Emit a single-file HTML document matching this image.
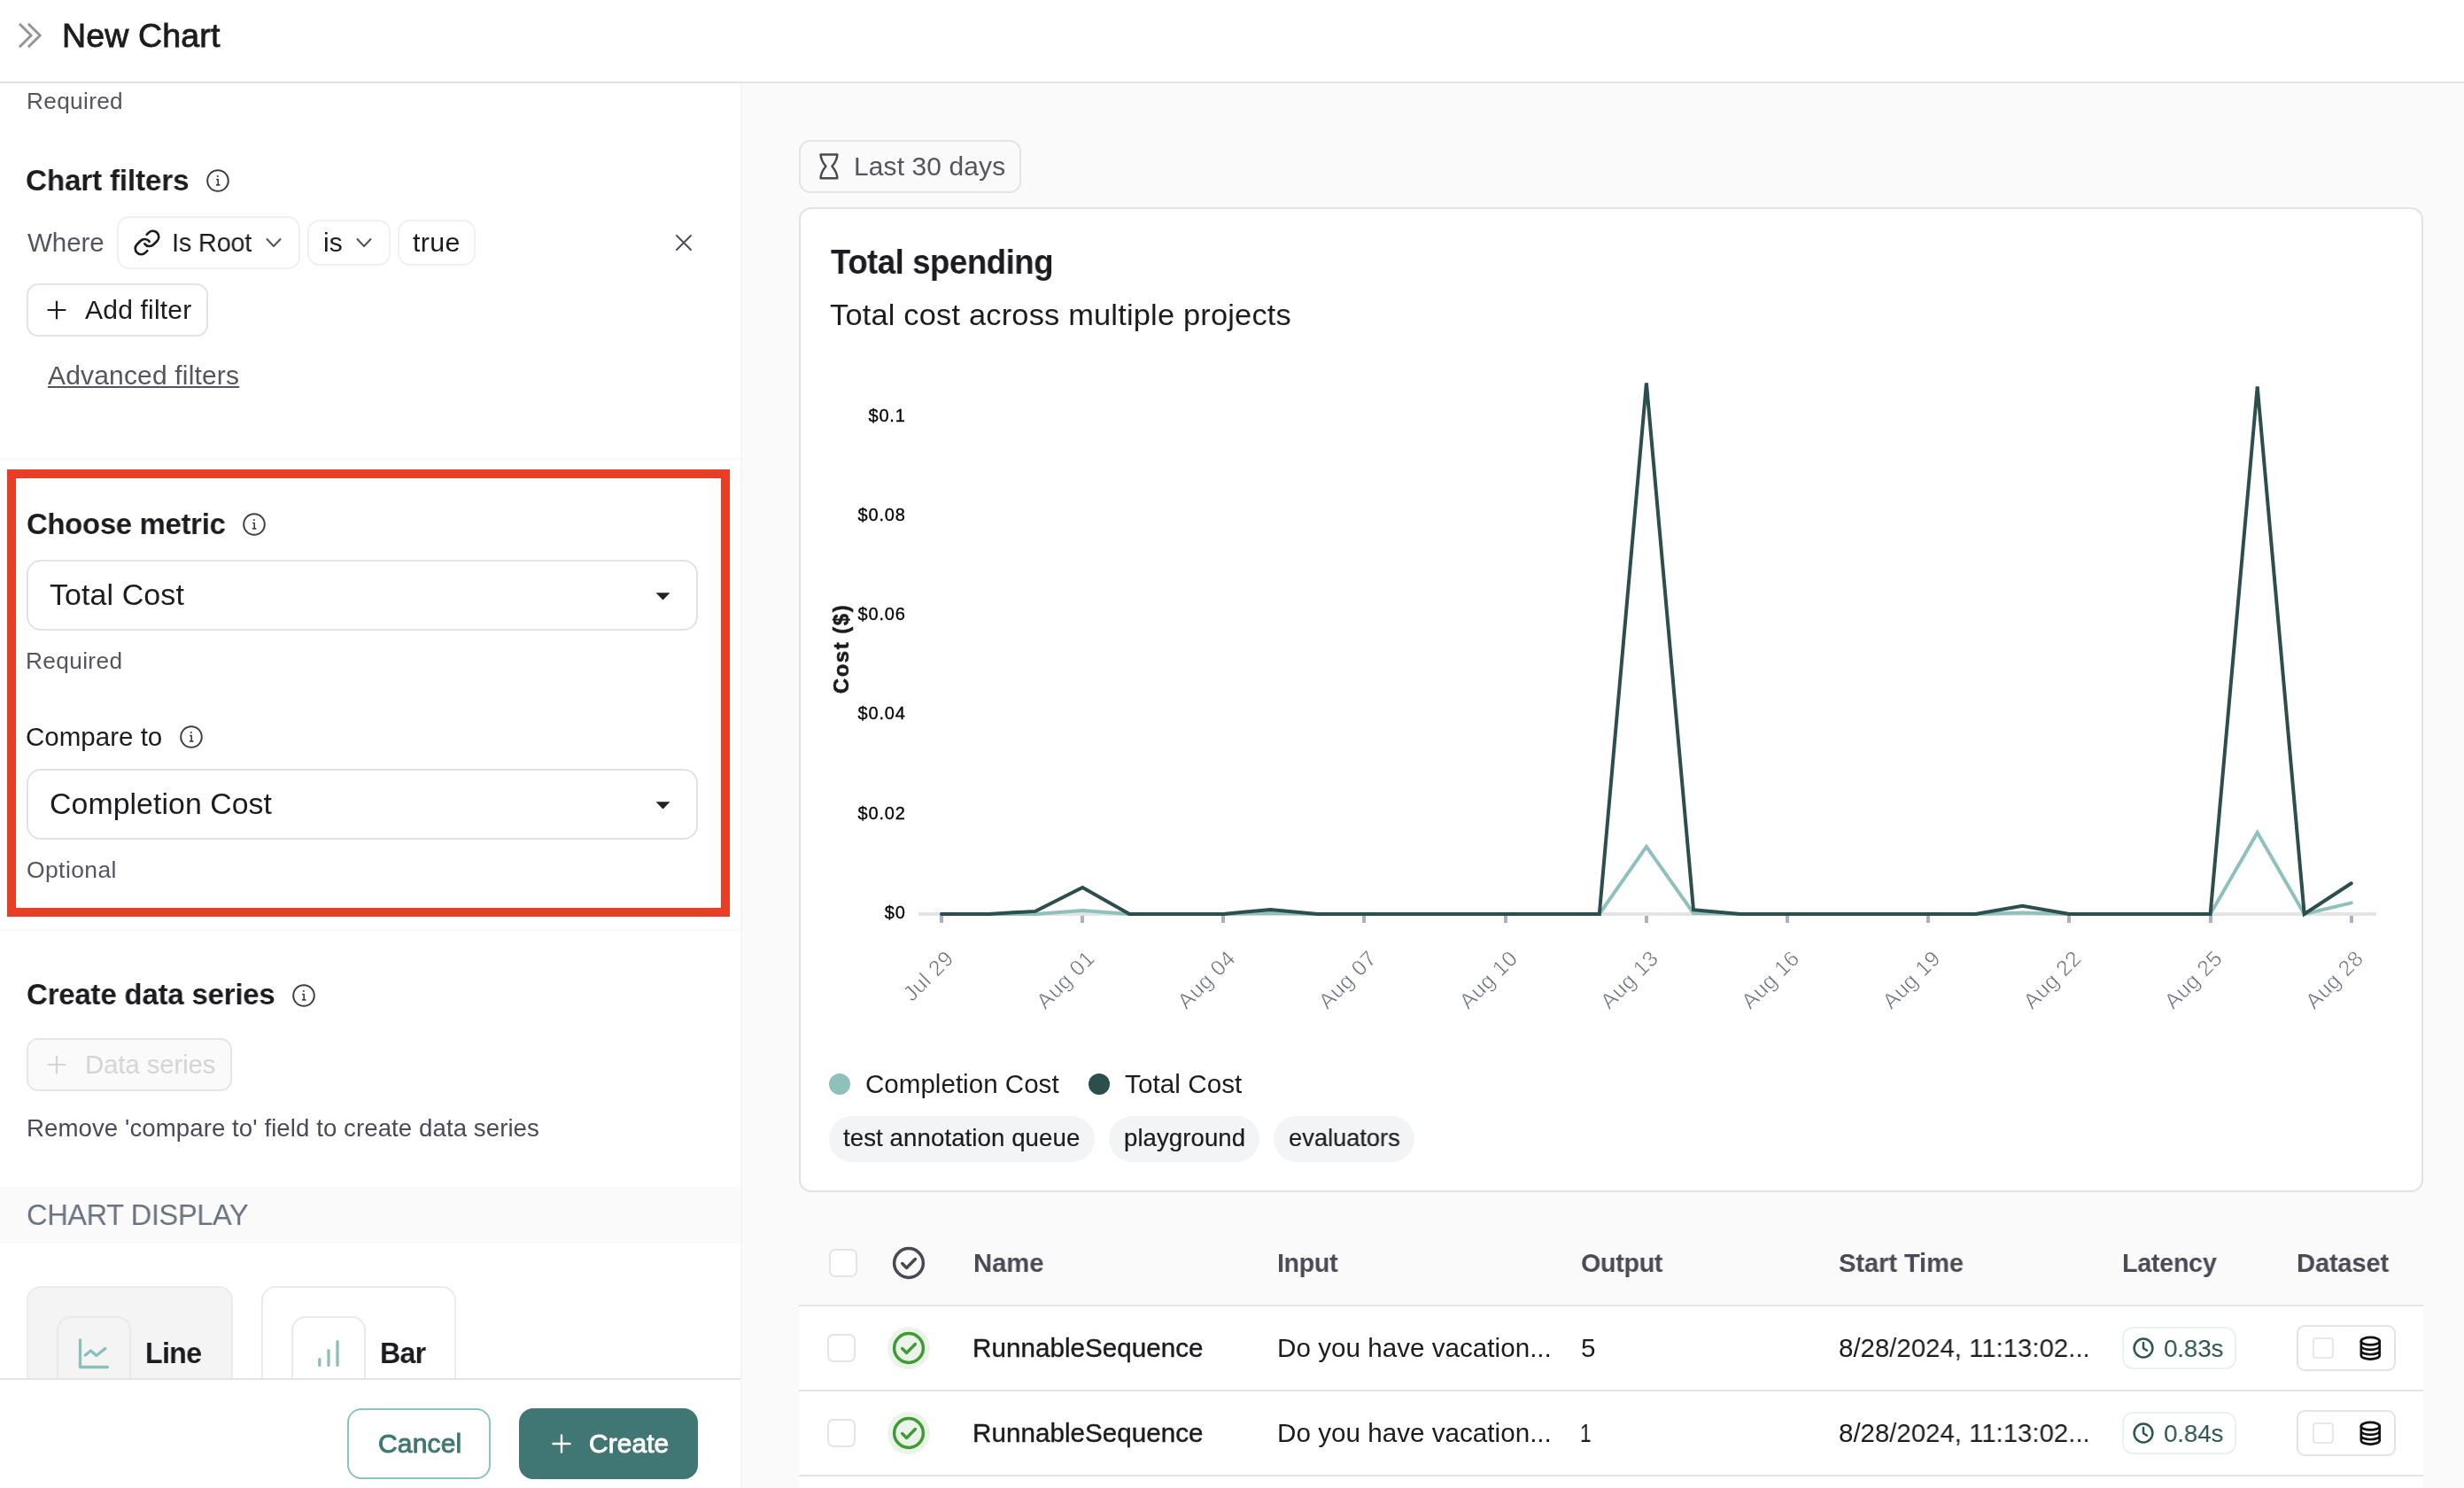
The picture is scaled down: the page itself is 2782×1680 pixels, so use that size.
<!DOCTYPE html>
<html lang="en">
<head>
<meta charset="utf-8">
<title>New Chart</title>
<style>
*{box-sizing:border-box;margin:0;padding:0}
html,body{width:2782px;height:1680px;overflow:hidden}
body{position:relative;background:#fafafa;font-family:"Liberation Sans",sans-serif;color:#1c1c20;-webkit-font-smoothing:antialiased}
.abs,.t,.box,svg.ic{position:absolute}
.t{white-space:pre;line-height:1;display:block;transform-origin:0 50%;will-change:transform}
.box{border:2px solid #e4e4e7;background:#fff}
header{position:absolute;left:0;top:0;width:2782px;height:94px;background:#fff;border-bottom:2px solid #e2e2e6}
aside{position:absolute;left:0;top:94px;width:838px;height:1586px;background:#fff;border-right:2px solid #f4f4f5}
main{position:absolute;left:838px;top:94px;width:1944px;height:1586px;background:#fafafa}
.band{position:absolute;left:0;width:836px;background:#fafafa}
.hl{position:absolute;left:8px;top:530px;width:816px;height:505px;border:10px solid #e83e26}
footer{position:absolute;left:0;top:1556px;width:836px;height:124px;background:#fff;border-top:2px solid #e4e4e7}
svg{overflow:visible}
svg.ic{fill:none;stroke-linecap:round;stroke-linejoin:round}

</style>
</head>
<body>
<header></header>
<aside></aside>
<main></main>

<!-- left panel -->
<svg class="ic" style="left:18px;top:24px" width="32" height="32" viewBox="0 0 32 32" stroke="#949494" stroke-width="3"><path d="M4.8 3.7 17.2 16 4.8 28.3M14.8 3.7 27.2 16 14.8 28.3"/></svg>

<div class="band" style="top:516px;height:4px"></div>
<div class="band" style="top:1048px;height:4px"></div>

<!-- chart filters -->
<svg class="ic info" style="left:232px;top:190px" width="28" height="28" viewBox="0 0 28 28" stroke="#3f3f4a" stroke-width="2"><circle cx="14" cy="14" r="11.8"/><path d="M12.8 12.6h1.4v6M12.6 18.9h3.2" stroke-width="1.6"/><circle cx="13.8" cy="9" r="1.1" fill="#3f3f4a" stroke="none"/></svg>

<div class="box" style="left:132px;top:244px;width:207px;height:60px;border-radius:14px;border-color:#f0f0f2"></div>
<svg class="ic" style="left:150px;top:258px" width="32" height="32" viewBox="0 0 24 24" stroke="#1c1c20" stroke-width="2"><path d="M10 13a5 5 0 0 0 7.54.54l3-3a5 5 0 0 0-7.07-7.07l-1.72 1.71"/><path d="M14 11a5 5 0 0 0-7.540-.54l-3 3a5 5 0 0 0 7.070 7.070l1.710-1.710"/></svg>
<svg class="ic" style="left:300px;top:268px" width="18" height="12" viewBox="0 0 18 12" stroke="#52525b" stroke-width="2"><path d="M1.5 2 9 10 16.5 2"/></svg>

<div class="box" style="left:347px;top:248px;width:94px;height:52px;border-radius:14px;border-color:#f0f0f2"></div>
<svg class="ic" style="left:402px;top:268px" width="18" height="12" viewBox="0 0 18 12" stroke="#52525b" stroke-width="2"><path d="M1.5 2 9 10 16.5 2"/></svg>

<div class="box" style="left:449px;top:248px;width:88px;height:52px;border-radius:14px;border-color:#f0f0f2"></div>

<svg class="ic" style="left:762px;top:264px" width="20" height="20" viewBox="0 0 20 20" stroke="#4b4b57" stroke-width="1.9"><path d="M2 2 18 18M18 2 2 18"/></svg>

<div class="box" style="left:30px;top:320px;width:205px;height:60px;border-radius:13px"></div>
<svg class="ic" style="left:53px;top:339px" width="22" height="22" viewBox="0 0 22 22" stroke="#1c1c20" stroke-width="2.2"><path d="M11 1.5v19M1.5 11h19"/></svg>

<!-- highlighted metric section -->
<div class="hl"></div>
<svg class="ic info" style="left:273px;top:578px" width="28" height="28" viewBox="0 0 28 28" stroke="#3f3f4a" stroke-width="2"><circle cx="14" cy="14" r="11.8"/><path d="M12.8 12.6h1.4v6M12.6 18.9h3.2" stroke-width="1.6"/><circle cx="13.8" cy="9" r="1.1" fill="#3f3f4a" stroke="none"/></svg>
<div class="box" style="left:30px;top:632px;width:758px;height:80px;border-radius:16px;border-color:#e2e2e6"></div>
<svg class="abs" style="left:739.6px;top:668.8px" width="17" height="9" viewBox="0 0 17 9"><path d="M0.5 0.300h16L8.5 8.500z" fill="#222226"/></svg>
<svg class="ic info" style="left:202px;top:818px" width="28" height="28" viewBox="0 0 28 28" stroke="#3f3f4a" stroke-width="2"><circle cx="14" cy="14" r="11.8"/><path d="M12.8 12.6h1.4v6M12.6 18.9h3.2" stroke-width="1.6"/><circle cx="13.8" cy="9" r="1.1" fill="#3f3f4a" stroke="none"/></svg>
<div class="box" style="left:30px;top:868px;width:758px;height:80px;border-radius:16px;border-color:#e2e2e6"></div>
<svg class="abs" style="left:739.6px;top:904.8px" width="17" height="9" viewBox="0 0 17 9"><path d="M0.5 0.300h16L8.5 8.500z" fill="#222226"/></svg>

<!-- data series -->
<svg class="ic info" style="left:329px;top:1110px" width="28" height="28" viewBox="0 0 28 28" stroke="#3f3f4a" stroke-width="2"><circle cx="14" cy="14" r="11.8"/><path d="M12.8 12.6h1.4v6M12.6 18.9h3.2" stroke-width="1.6"/><circle cx="13.8" cy="9" r="1.1" fill="#3f3f4a" stroke="none"/></svg>
<div class="box" style="left:30px;top:1172px;width:232px;height:60px;border-radius:13px;background:#fafafa;border-color:#e6e6e9"></div>
<svg class="ic" style="left:53px;top:1191px" width="22" height="22" viewBox="0 0 22 22" stroke="#d4d4d8" stroke-width="2.2"><path d="M11 1.5v19M1.5 11h19"/></svg>

<!-- chart display -->
<div class="band" style="top:1340px;height:64px"></div>
<div class="box" style="left:30px;top:1452px;width:233px;height:160px;border-radius:16px;background:#f4f4f5;border-color:#ebebee"></div>
<div class="box" style="left:64px;top:1486px;width:84px;height:120px;border-radius:16px;background:#f4f4f5;border-color:#e9e9ec"></div>
<svg class="ic" style="left:88px;top:1511px" width="36" height="34" viewBox="0 0 36 34" stroke="#8cbfba" stroke-width="3.3"><path d="M2.5 2v30.5h31M8.3 19l6.2-5 6.3 5.5 10-8"/></svg>
<div class="box" style="left:295px;top:1452px;width:220px;height:160px;border-radius:16px;border-color:#ebebee"></div>
<div class="box" style="left:329px;top:1486px;width:84px;height:120px;border-radius:16px;border-color:#e9e9ec"></div>
<svg class="ic" style="left:358px;top:1511px" width="26" height="34" viewBox="0 0 26 34" stroke="#8cbfba" stroke-width="3.3"><path d="M2.8 30.4v-6.700M13 30.4v-16.700M23 30.4V3.700"/></svg>

<footer></footer>
<div class="box" style="left:392px;top:1590px;width:162px;height:80px;border-radius:16px;border-color:#8fc1bc"></div>
<div class="box" style="left:586px;top:1590px;width:202px;height:80px;border-radius:16px;border-color:#407673;background:#407673"></div>
<svg class="ic" style="left:623px;top:1619px" width="22" height="22" viewBox="0 0 22 22" stroke="#fff" stroke-width="2.4"><path d="M11 1.5v19M1.5 11h19"/></svg>

<!-- right panel -->
<div class="box" style="left:902px;top:158px;width:251px;height:60px;border-radius:13px;background:#fafafa"></div>
<svg class="ic" style="left:922px;top:172px" width="28" height="32" viewBox="0 0 28 32" stroke="#4a4a57" stroke-width="2.5"><path d="M4.6 2.400H23.3C23.3 8 21 11.5 17.4 15.8C21 20 23.3 23.5 23.3 29.25H4.6C4.6 23.5 7 20 10.5 15.8C7 11.5 4.6 8 4.6 2.400Z"/></svg>

<div class="box" style="left:902px;top:234px;width:1834px;height:1112px;border-radius:14px;border-color:#e2e2e5"></div>

<svg class="abs" style="left:0;top:0;will-change:transform" width="2782" height="1680" viewBox="0 0 2782 1680" font-family="Liberation Sans, sans-serif">
<line x1="1037" y1="1032" x2="2683" y2="1032" stroke="#e4e4e7" stroke-width="4"/>
<line x1="1063" y1="1034" x2="1063" y2="1042" stroke="#a9b1bd" stroke-width="4"/>
<line x1="1222" y1="1034" x2="1222" y2="1042" stroke="#a9b1bd" stroke-width="4"/>
<line x1="1381" y1="1034" x2="1381" y2="1042" stroke="#a9b1bd" stroke-width="4"/>
<line x1="1540" y1="1034" x2="1540" y2="1042" stroke="#a9b1bd" stroke-width="4"/>
<line x1="1700" y1="1034" x2="1700" y2="1042" stroke="#a9b1bd" stroke-width="4"/>
<line x1="1859" y1="1034" x2="1859" y2="1042" stroke="#a9b1bd" stroke-width="4"/>
<line x1="2018" y1="1034" x2="2018" y2="1042" stroke="#a9b1bd" stroke-width="4"/>
<line x1="2177" y1="1034" x2="2177" y2="1042" stroke="#a9b1bd" stroke-width="4"/>
<line x1="2336" y1="1034" x2="2336" y2="1042" stroke="#a9b1bd" stroke-width="4"/>
<line x1="2496" y1="1034" x2="2496" y2="1042" stroke="#a9b1bd" stroke-width="4"/>
<line x1="2655" y1="1034" x2="2655" y2="1042" stroke="#a9b1bd" stroke-width="4"/>
<polyline points="1063.0,1031.9 1116.1,1031.9 1169.1,1031.9 1222.2,1027.9 1275.2,1031.9 1328.3,1031.9 1381.4,1031.9 1434.4,1030.9 1487.5,1031.9 1540.5,1031.9 1593.6,1031.9 1646.7,1031.9 1699.7,1031.9 1752.8,1031.9 1805.8,1031.9 1858.9,955.9 1912.0,1030.9 1965.0,1031.9 2018.1,1031.9 2071.1,1031.9 2124.2,1031.9 2177.3,1031.9 2230.3,1031.9 2283.4,1030.4 2336.4,1031.9 2389.5,1031.9 2442.6,1031.9 2495.6,1031.9 2548.7,939.9 2601.7,1031.9 2654.8,1019.4" fill="none" stroke="#8fc1bc" stroke-width="4" stroke-linejoin="miter" stroke-linecap="round"/>
<polyline points="1063.0,1031.9 1116.1,1031.9 1169.1,1028.9 1222.2,1001.9 1275.2,1031.9 1328.3,1031.9 1381.4,1031.9 1434.4,1026.9 1487.5,1031.9 1540.5,1031.9 1593.6,1031.9 1646.7,1031.9 1699.7,1031.9 1752.8,1031.9 1805.8,1031.9 1858.9,432.4 1912.0,1027.2 1965.0,1031.9 2018.1,1031.9 2071.1,1031.9 2124.2,1031.9 2177.3,1031.9 2230.3,1031.9 2283.4,1022.9 2336.4,1031.9 2389.5,1031.9 2442.6,1031.9 2495.6,1031.9 2548.7,436.4 2601.7,1031.9 2654.8,997.3" fill="none" stroke="#2c4f4e" stroke-width="4" stroke-linejoin="miter" stroke-linecap="round"/>
<text x="1022.6" y="1037.0" text-anchor="end" font-size="20" letter-spacing="0.8" fill="#000" stroke="#000" stroke-width="0.3">$0</text>
<text x="1022.6" y="924.7" text-anchor="end" font-size="20" letter-spacing="0.8" fill="#000" stroke="#000" stroke-width="0.3">$0.02</text>
<text x="1022.6" y="812.4" text-anchor="end" font-size="20" letter-spacing="0.8" fill="#000" stroke="#000" stroke-width="0.3">$0.04</text>
<text x="1022.6" y="700.1" text-anchor="end" font-size="20" letter-spacing="0.8" fill="#000" stroke="#000" stroke-width="0.3">$0.06</text>
<text x="1022.6" y="587.8" text-anchor="end" font-size="20" letter-spacing="0.8" fill="#000" stroke="#000" stroke-width="0.3">$0.08</text>
<text x="1022.6" y="475.5" text-anchor="end" font-size="20" letter-spacing="0.8" fill="#000" stroke="#000" stroke-width="0.3">$0.1</text>
<text transform="translate(957.6 732.5) rotate(-90)" text-anchor="middle" font-size="24" font-weight="700" letter-spacing="1.5" fill="#1c1c20" stroke="#1c1c20" stroke-width="0.55" stroke-linejoin="round">Cost ($)</text>
<text transform="translate(1078.2 1083.5) rotate(-45)" text-anchor="end" font-size="24.5" letter-spacing="0.5" fill="#666b78" stroke="#ffffff" stroke-width="0.55">Jul 29</text>
<text transform="translate(1237.4 1083.5) rotate(-45)" text-anchor="end" font-size="24.5" letter-spacing="0.5" fill="#666b78" stroke="#ffffff" stroke-width="0.55">Aug 01</text>
<text transform="translate(1396.6 1083.5) rotate(-45)" text-anchor="end" font-size="24.5" letter-spacing="0.5" fill="#666b78" stroke="#ffffff" stroke-width="0.55">Aug 04</text>
<text transform="translate(1555.7 1083.5) rotate(-45)" text-anchor="end" font-size="24.5" letter-spacing="0.5" fill="#666b78" stroke="#ffffff" stroke-width="0.55">Aug 07</text>
<text transform="translate(1714.9 1083.5) rotate(-45)" text-anchor="end" font-size="24.5" letter-spacing="0.5" fill="#666b78" stroke="#ffffff" stroke-width="0.55">Aug 10</text>
<text transform="translate(1874.1 1083.5) rotate(-45)" text-anchor="end" font-size="24.5" letter-spacing="0.5" fill="#666b78" stroke="#ffffff" stroke-width="0.55">Aug 13</text>
<text transform="translate(2033.3 1083.5) rotate(-45)" text-anchor="end" font-size="24.5" letter-spacing="0.5" fill="#666b78" stroke="#ffffff" stroke-width="0.55">Aug 16</text>
<text transform="translate(2192.5 1083.5) rotate(-45)" text-anchor="end" font-size="24.5" letter-spacing="0.5" fill="#666b78" stroke="#ffffff" stroke-width="0.55">Aug 19</text>
<text transform="translate(2351.6 1083.5) rotate(-45)" text-anchor="end" font-size="24.5" letter-spacing="0.5" fill="#666b78" stroke="#ffffff" stroke-width="0.55">Aug 22</text>
<text transform="translate(2510.8 1083.5) rotate(-45)" text-anchor="end" font-size="24.5" letter-spacing="0.5" fill="#666b78" stroke="#ffffff" stroke-width="0.55">Aug 25</text>
<text transform="translate(2670.0 1083.5) rotate(-45)" text-anchor="end" font-size="24.5" letter-spacing="0.5" fill="#666b78" stroke="#ffffff" stroke-width="0.55">Aug 28</text>
</svg>

<!-- legend + tags -->
<div class="abs" style="left:936px;top:1212px;width:24px;height:24px;border-radius:50%;background:#8fc1bc"></div>
<div class="abs" style="left:1229px;top:1212px;width:24px;height:24px;border-radius:50%;background:#2c4f4e"></div>
<div class="abs" style="left:936px;top:1260px;width:300px;height:52px;border-radius:26px;background:#f3f4f6"></div>
<div class="abs" style="left:1252px;top:1260px;width:170px;height:52px;border-radius:26px;background:#f3f4f6"></div>
<div class="abs" style="left:1438px;top:1260px;width:159px;height:52px;border-radius:26px;background:#f3f4f6"></div>

<!-- table -->
<div class="abs" style="left:902px;top:1473px;width:1834px;height:2px;background:#e4e4e7"></div>
<div class="abs" style="left:902px;top:1475px;width:1834px;height:94px;background:#fff"></div>
<div class="abs" style="left:902px;top:1569px;width:1834px;height:2px;background:#e4e4e7"></div>
<div class="abs" style="left:902px;top:1571px;width:1834px;height:94px;background:#fff"></div>
<div class="abs" style="left:902px;top:1665px;width:1834px;height:2px;background:#e4e4e7"></div>
<div class="abs" style="left:902px;top:1667px;width:1834px;height:13px;background:#fff"></div>

<div class="box" style="left:936px;top:1410px;width:32px;height:32px;border-radius:7px"></div>
<svg class="ic" style="left:1006px;top:1406px" width="40" height="40" viewBox="0 0 40 40" stroke="#484854" stroke-width="3.5"><circle cx="20" cy="20" r="16.4"/><path d="M12.700 20.600l4.900 4.900 9.800-10"/></svg>
<div class="box" style="left:934px;top:1506px;width:32px;height:32px;border-radius:7px"></div>
<div class="abs" style="left:1002px;top:1498px;width:48px;height:48px;border-radius:50%;background:#eaf4e8"></div>
<svg class="ic" style="left:1006px;top:1502px" width="40" height="40" viewBox="0 0 40 40" stroke="#3f9b36" stroke-width="3.5"><circle cx="20" cy="20" r="16.4"/><path d="M12.700 20.600l4.900 4.900 9.800-10"/></svg>
<div class="box" style="left:2396px;top:1498px;width:129px;height:48px;border-radius:12px;border-color:#eaf3e9"></div>
<svg class="ic" style="left:2407px;top:1509px" width="26" height="26" viewBox="0 0 26 26" stroke="#2d5552" stroke-width="2.5"><circle cx="13" cy="13" r="10.4"/><path d="M13 7v6.300l4 2.400"/></svg>
<div class="box" style="left:2593px;top:1496px;width:112px;height:52px;border-radius:9px"></div>
<div class="box" style="left:2611px;top:1510px;width:24px;height:24px;border-radius:4px;border-width:2px;border-color:#e8e8eb"></div>
<svg class="ic" style="left:2662.8px;top:1507.8px" width="26.6" height="28.5" viewBox="0 0 28 30" stroke="#111" stroke-width="2.8"><ellipse cx="14" cy="6.500" rx="11" ry="4.500"/><path d="M3 6.500v17c0 2.500 4.900 4.500 11 4.500s11-2 11-4.500v-17M3 12.200c0 2.500 4.900 4.500 11 4.500s11-2 11-4.500M3 17.900c0 2.500 4.900 4.500 11 4.500s11-2 11-4.500"/></svg>
<div class="box" style="left:934px;top:1602px;width:32px;height:32px;border-radius:7px"></div>
<div class="abs" style="left:1002px;top:1594px;width:48px;height:48px;border-radius:50%;background:#eaf4e8"></div>
<svg class="ic" style="left:1006px;top:1598px" width="40" height="40" viewBox="0 0 40 40" stroke="#3f9b36" stroke-width="3.5"><circle cx="20" cy="20" r="16.4"/><path d="M12.700 20.600l4.900 4.900 9.800-10"/></svg>
<div class="box" style="left:2396px;top:1594px;width:129px;height:48px;border-radius:12px;border-color:#eaf3e9"></div>
<svg class="ic" style="left:2407px;top:1605px" width="26" height="26" viewBox="0 0 26 26" stroke="#2d5552" stroke-width="2.5"><circle cx="13" cy="13" r="10.4"/><path d="M13 7v6.300l4 2.400"/></svg>
<div class="box" style="left:2593px;top:1592px;width:112px;height:52px;border-radius:9px"></div>
<div class="box" style="left:2611px;top:1606px;width:24px;height:24px;border-radius:4px;border-width:2px;border-color:#e8e8eb"></div>
<svg class="ic" style="left:2662.8px;top:1603.8px" width="26.6" height="28.5" viewBox="0 0 28 30" stroke="#111" stroke-width="2.8"><ellipse cx="14" cy="6.500" rx="11" ry="4.500"/><path d="M3 6.500v17c0 2.500 4.900 4.500 11 4.500s11-2 11-4.500v-17M3 12.200c0 2.500 4.900 4.500 11 4.500s11-2 11-4.500M3 17.900c0 2.500 4.900 4.500 11 4.500s11-2 11-4.500"/></svg>
<span class="t" style="left:69.94px;top:22.00px;font-size:37.26px;color:#1c1c20;letter-spacing:0.115px;transform:scaleX(1.0083);-webkit-text-stroke:0.85px #1c1c20;">New Chart</span>
<span class="t" style="left:29.65px;top:102.00px;font-size:25.32px;color:#55555f;letter-spacing:0.316px;transform:scaleX(1.0357);">Required</span>
<span class="t" style="left:29.12px;top:187.00px;font-size:33.76px;color:#1c1c20;letter-spacing:-0.162px;transform:scaleX(0.9843);font-weight:700;">Chart filters</span>
<span class="t" style="left:30.66px;top:259.00px;font-size:29.54px;color:#55555f;letter-spacing:-0.046px;transform:scaleX(0.9961);">Where</span>
<span class="t" style="left:193.70px;top:259.00px;font-size:29.54px;color:#1c1c20;letter-spacing:-0.212px;transform:scaleX(0.9796);">Is Root</span>
<span class="t" style="left:364.53px;top:259.00px;font-size:29.54px;color:#1c1c20;letter-spacing:0.173px;transform:scaleX(1.0154);">is</span>
<span class="t" style="left:465.57px;top:259.00px;font-size:29.54px;color:#1c1c20;letter-spacing:0.313px;transform:scaleX(1.0290);">true</span>
<span class="t" style="left:96.12px;top:335.00px;font-size:29.54px;color:#1c1c20;letter-spacing:0.161px;transform:scaleX(1.0190);">Add filter</span>
<span class="t" style="left:53.73px;top:409.00px;font-size:29.54px;color:#55555f;letter-spacing:0.160px;transform:scaleX(1.0166);text-decoration:underline;text-decoration-thickness:2px;text-underline-offset:2px;">Advanced filters</span>
<span class="t" style="left:29.52px;top:575.00px;font-size:33.76px;color:#1c1c20;letter-spacing:-0.332px;transform:scaleX(0.9753);font-weight:700;">Choose metric</span>
<span class="t" style="left:55.80px;top:655.00px;font-size:33.76px;color:#1c1c20;letter-spacing:0.080px;transform:scaleX(1.0073);">Total Cost</span>
<span class="t" style="left:29.04px;top:734.00px;font-size:25.32px;color:#55555f;letter-spacing:0.338px;transform:scaleX(1.0373);">Required</span>
<span class="t" style="left:29.14px;top:817.00px;font-size:29.54px;color:#1c1c20;">Compare to</span>
<span class="t" style="left:55.53px;top:891.00px;font-size:33.76px;color:#1c1c20;letter-spacing:0.049px;transform:scaleX(1.0033);">Completion Cost</span>
<span class="t" style="left:30.04px;top:970.00px;font-size:25.32px;color:#55555f;letter-spacing:0.383px;transform:scaleX(1.0461);">Optional</span>
<span class="t" style="left:30.12px;top:1106.00px;font-size:33.76px;color:#1c1c20;letter-spacing:-0.231px;transform:scaleX(0.9788);font-weight:700;">Create data series</span>
<span class="t" style="left:95.76px;top:1187.00px;font-size:29.54px;color:#d4d4d8;letter-spacing:-0.074px;transform:scaleX(0.9918);">Data series</span>
<span class="t" style="left:29.68px;top:1260.00px;font-size:27.43px;color:#4b4b57;letter-spacing:0.063px;transform:scaleX(1.0080);">Remove &#x27;compare to&#x27; field to create data series</span>
<span class="t" style="left:29.53px;top:1355.00px;font-size:33.76px;color:#6b7280;letter-spacing:-0.474px;transform:scaleX(0.9685);">CHART DISPLAY</span>
<span class="t" style="left:164.21px;top:1511.00px;font-size:33.76px;color:#1c1c20;letter-spacing:-0.717px;transform:scaleX(0.9515);font-weight:700;">Line</span>
<span class="t" style="left:429.17px;top:1511.00px;font-size:33.76px;color:#1c1c20;letter-spacing:-0.813px;transform:scaleX(0.9540);font-weight:700;">Bar</span>
<span class="t" style="left:426.88px;top:1615.00px;font-size:29.54px;color:#3f7872;letter-spacing:0.176px;transform:scaleX(1.0146);-webkit-text-stroke:0.9px #3f7872;">Cancel</span>
<span class="t" style="left:665.38px;top:1615.00px;font-size:29.54px;color:#ffffff;letter-spacing:0.098px;transform:scaleX(1.0113);-webkit-text-stroke:0.9px #ffffff;">Create</span>
<span class="t" style="left:964.06px;top:173.00px;font-size:29.54px;color:#55555f;letter-spacing:0.123px;transform:scaleX(1.0137);">Last 30 days</span>
<span class="t" style="left:937.76px;top:277.00px;font-size:37.98px;color:#1c1c20;letter-spacing:-0.494px;transform:scaleX(0.9650);font-weight:700;">Total spending</span>
<span class="t" style="left:936.77px;top:339.00px;font-size:33.76px;color:#1c1c20;letter-spacing:0.187px;transform:scaleX(1.0193);">Total cost across multiple projects</span>
<span class="t" style="left:977.14px;top:1209.00px;font-size:29.54px;color:#1c1c20;letter-spacing:0.022px;">Completion Cost</span>
<span class="t" style="left:1269.64px;top:1209.00px;font-size:29.54px;color:#1c1c20;letter-spacing:0.052px;transform:scaleX(1.0040);">Total Cost</span>
<span class="t" style="left:952.44px;top:1271.00px;font-size:27.43px;color:#1c1c20;letter-spacing:0.067px;transform:scaleX(1.0084);-webkit-text-stroke:0.2px #1c1c20;">test annotation queue</span>
<span class="t" style="left:1268.94px;top:1271.00px;font-size:27.43px;color:#1c1c20;letter-spacing:0.063px;transform:scaleX(1.0057);-webkit-text-stroke:0.2px #1c1c20;">playground</span>
<span class="t" style="left:1454.64px;top:1271.00px;font-size:27.43px;color:#1c1c20;letter-spacing:-0.013px;transform:scaleX(0.9947);-webkit-text-stroke:0.2px #1c1c20;">evaluators</span>
<span class="t" style="left:1098.53px;top:1411.00px;font-size:29.54px;color:#4a4a56;letter-spacing:-0.067px;transform:scaleX(0.9920);font-weight:700;">Name</span>
<span class="t" style="left:1441.53px;top:1411.00px;font-size:29.54px;color:#4a4a56;letter-spacing:-0.340px;transform:scaleX(0.9679);font-weight:700;">Input</span>
<span class="t" style="left:1784.98px;top:1411.00px;font-size:29.54px;color:#4a4a56;letter-spacing:-0.375px;transform:scaleX(0.9736);font-weight:700;">Output</span>
<span class="t" style="left:2075.62px;top:1411.00px;font-size:29.54px;color:#4a4a56;letter-spacing:-0.130px;transform:scaleX(0.9884);font-weight:700;">Start Time</span>
<span class="t" style="left:2396.13px;top:1411.00px;font-size:29.54px;color:#4a4a56;letter-spacing:-0.330px;transform:scaleX(0.9745);font-weight:700;">Latency</span>
<span class="t" style="left:2592.93px;top:1411.00px;font-size:29.54px;color:#4a4a56;letter-spacing:-0.170px;transform:scaleX(0.9865);font-weight:700;">Dataset</span>
<span class="t" style="left:1098.32px;top:1507.00px;font-size:29.54px;color:#1c1c20;letter-spacing:0.032px;transform:scaleX(1.0023);-webkit-text-stroke:0.4px #1c1c20;">RunnableSequence</span>
<span class="t" style="left:1441.74px;top:1507.00px;font-size:29.54px;color:#1c1c20;letter-spacing:0.019px;transform:scaleX(1.0026);">Do you have vacation...</span>
<span class="t" style="left:1784.94px;top:1507.00px;font-size:29.54px;color:#1c1c20;transform:scaleX(0.9787);">5</span>
<span class="t" style="left:2076.03px;top:1507.00px;font-size:29.54px;color:#1c1c20;letter-spacing:-0.031px;transform:scaleX(0.9971);">8/28/2024, 11:13:02...</span>
<span class="t" style="left:2443.22px;top:1508.00px;font-size:28.48px;color:#2D5552;letter-spacing:-0.223px;transform:scaleX(0.9803);">0.83s</span>
<span class="t" style="left:1098.32px;top:1603.00px;font-size:29.54px;color:#1c1c20;letter-spacing:0.032px;transform:scaleX(1.0023);-webkit-text-stroke:0.4px #1c1c20;">RunnableSequence</span>
<span class="t" style="left:1441.74px;top:1603.00px;font-size:29.54px;color:#1c1c20;letter-spacing:0.019px;transform:scaleX(1.0026);">Do you have vacation...</span>
<span class="t" style="left:1784.34px;top:1603.00px;font-size:29.54px;color:#1c1c20;transform:scaleX(0.7638);">1</span>
<span class="t" style="left:2076.03px;top:1603.00px;font-size:29.54px;color:#1c1c20;letter-spacing:-0.031px;transform:scaleX(0.9971);">8/28/2024, 11:13:02...</span>
<span class="t" style="left:2443.22px;top:1604.00px;font-size:28.48px;color:#2D5552;letter-spacing:-0.223px;transform:scaleX(0.9803);">0.84s</span>

</body>
</html>
